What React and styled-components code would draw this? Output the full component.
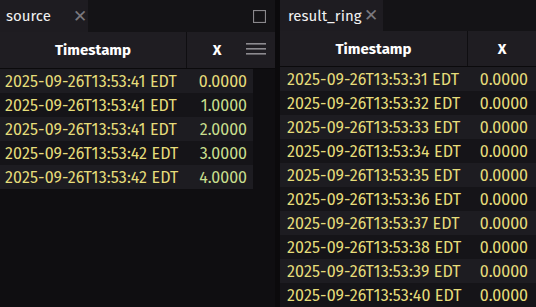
import React from 'react';
import styled, { createGlobalStyle } from 'styled-components';

const GlobalStyle = createGlobalStyle`
  html, body {
    margin: 0;
    padding: 0;
    background: #0f0e11;
    overflow: hidden;
  }
  body {
    font-family: "Fira Sans", "Noto Sans", "Open Sans", sans-serif;
  }
`;

const Layout = styled.div`
  display: flex;
  width: 536px;
  height: 307px;
  background: #0f0e11;
`;

const Panel = styled.section`
  display: flex;
  flex-direction: column;
  width: ${props => props.width}px;
  flex-shrink: 0;
  overflow: hidden;
`;

const Divider = styled.div`
  width: 5px;
  flex-shrink: 0;
  background: #0b0a0c;
`;

const TabBar = styled.div`
  display: flex;
  align-items: stretch;
  height: 32px;
  background: #141316;
`;

const Tab = styled.div`
  display: flex;
  align-items: center;
  gap: ${props => props.gap}px;
  width: ${props => props.width}px;
  padding-left: ${props => props.pad}px;
  box-sizing: border-box;
  background: #1e1c21;
  color: #f2f2f2;
  font-size: 15px;
`;

const Close = styled.span`
  color: #7a787d;
  font-size: 17px;
  line-height: 1;
`;

const Spacer = styled.div`
  flex: 1;
`;

const MaxButton = styled.div`
  display: flex;
  align-items: center;
  padding-right: 9px;
`;

const Header = styled.div`
  display: grid;
  grid-template-columns: ${props => props.cols};
  height: 36px;
  background: #1f1d22;
  border-bottom: 1px solid #0b0a0c;
`;

const HeadCell = styled.div`
  position: relative;
  display: flex;
  align-items: center;
  justify-content: center;
  color: #ffffff;
  font-weight: 700;
  font-size: 15px;
  border-left: ${props => (props.first ? 'none' : '1px solid #0f0e11')};
`;

const Menu = styled.svg`
  position: absolute;
  right: 9px;
  top: 11px;
`;

const Body = styled.div`
  display: flex;
  flex-direction: column;
  width: ${props => props.width}px;
`;

const Row = styled.div`
  display: grid;
  grid-template-columns: ${props => props.cols};
  height: 24px;
  align-items: center;
  background: ${props => (props.odd ? '#1d1c21' : '#151418')};
  font-size: 16px;
`;

const Stamp = styled.div`
  padding-left: ${props => props.pad}px;
  color: #e6dd7a;
  white-space: nowrap;
  letter-spacing: 0.12px;
`;

const Value = styled.div`
  text-align: right;
  padding-right: ${props => props.pad}px;
  color: ${props => (props.green ? '#c8df8e' : '#e6dd7a')};
`;

const sourceRows = [
  ['2025-09-26T13:53:41 EDT', '0.0000'],
  ['2025-09-26T13:53:41 EDT', '1.0000'],
  ['2025-09-26T13:53:41 EDT', '2.0000'],
  ['2025-09-26T13:53:42 EDT', '3.0000'],
  ['2025-09-26T13:53:42 EDT', '4.0000'],
];

const ringRows = Array.from({ length: 10 }, (_, i) => [
  `2025-09-26T13:53:${31 + i} EDT`,
  '0.0000',
]);

export default function App() {
  return (
    <>
      <GlobalStyle />
      <Layout>
        <Panel width={275}>
          <TabBar>
            <Tab width={88} pad={6} gap={22}>
              source
              <Close>✕</Close>
            </Tab>
            <Spacer />
            <MaxButton>
              <svg width="13" height="13" viewBox="0 0 13 13">
                <rect x="0.5" y="0.5" width="12" height="12" fill="none" stroke="#8a888c" strokeWidth="1.2" />
              </svg>
            </MaxButton>
          </TabBar>
          <Header cols="186px 89px">
            <HeadCell first>Timestamp</HeadCell>
            <HeadCell>
              <span style={{ marginRight: 28 }}>X</span>
              <Menu width="20" height="12" viewBox="0 0 20 12">
                <rect x="0" y="0" width="20" height="1.6" fill="#8c8a8f" />
                <rect x="0" y="5" width="20" height="1.6" fill="#8c8a8f" />
                <rect x="0" y="10" width="20" height="1.6" fill="#8c8a8f" />
              </Menu>
            </HeadCell>
          </Header>
          <Body width={253}>
            {sourceRows.map(([t, v], i) => (
              <Row key={i} odd={i % 2 === 0} cols="186px 67px">
                <Stamp pad={5}>{t}</Stamp>
                <Value pad={6} green={i > 0}>{v}</Value>
              </Row>
            ))}
          </Body>
        </Panel>
        <Divider />
        <Panel width={256}>
          <TabBar>
            <Tab width={103} pad={8} gap={3}>
              result_ring
              <Close>✕</Close>
            </Tab>
            <Spacer />
          </TabBar>
          <Header cols="187px 69px">
            <HeadCell first>Timestamp</HeadCell>
            <HeadCell>X</HeadCell>
          </Header>
          <Body width={256}>
            {ringRows.map(([t, v], i) => (
              <Row key={i} odd={i % 2 === 0} cols="187px 69px">
                <Stamp pad={7}>{t}</Stamp>
                <Value pad={8}>{v}</Value>
              </Row>
            ))}
          </Body>
        </Panel>
      </Layout>
    </>
  );
}
